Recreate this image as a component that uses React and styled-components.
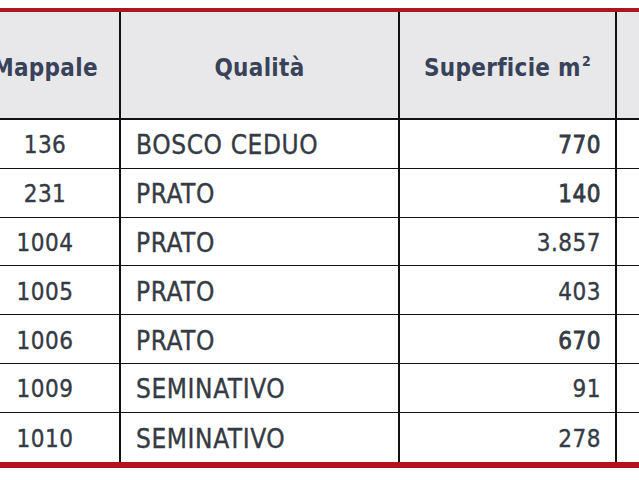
import styled, { createGlobalStyle } from 'styled-components';

const GlobalStyle = createGlobalStyle`
  html, body {
    margin: 0;
    padding: 0;
    background: #ffffff;
  }
  body {
    font-family: "DejaVu Sans Condensed", "DejaVu Sans", sans-serif;
    font-stretch: condensed;
  }
`;

const Frame = styled.div`
  width: 639px;
  height: 480px;
  overflow: hidden;
  padding-top: 8px;
  box-sizing: border-box;
`;

const Grid = styled.div`
  display: grid;
  grid-template-columns: 150px 279px 217px 120px;
  margin-left: -29px;
  width: 766px;
  border-top: 4px solid #ad1820;
  border-bottom: 6px solid #b3121c;
`;

const HeadCell = styled.div`
  height: 108px;
  box-sizing: border-box;
  background: #e8e8ea;
  border-right: 2px solid #111;
  border-bottom: 2px solid #111;
  display: flex;
  align-items: center;
  justify-content: center;
  padding-top: 5px;
  font-weight: 700;
  font-size: 24px;
  letter-spacing: 0.3px;
  color: #384258;
`;

const Sup = styled.span`
  font-size: 14px;
  position: relative;
  top: -7px;
  margin-left: 1px;
`;

const Cell = styled.div`
  height: 48.8px;
  box-sizing: border-box;
  border-right: 2px solid #111;
  border-bottom: ${(p) => (p.$last ? 'none' : '1.5px solid #111')};
  display: flex;
  align-items: center;
  justify-content: ${(p) => p.$align || 'flex-start'};
  padding: 3px ${(p) => (p.$align === 'flex-end' ? '14px' : '0')} 0 ${(p) => (p.$align === 'flex-start' ? '15px' : '0')};
  font-size: ${(p) => (p.$text ? '26px' : '24px')};
  letter-spacing: ${(p) => (p.$text ? '0.6px' : '0.5px')};
  -webkit-text-stroke: ${(p) => (p.$bold ? '0.8px' : '0.35px')} #353b45;
  color: #353b45;
`;

const rows = [
  { mappale: '136', qualita: 'BOSCO CEDUO', sup: '770', bold: true },
  { mappale: '231', qualita: 'PRATO', sup: '140', bold: true },
  { mappale: '1004', qualita: 'PRATO', sup: '3.857' },
  { mappale: '1005', qualita: 'PRATO', sup: '403' },
  { mappale: '1006', qualita: 'PRATO', sup: '670', bold: true },
  { mappale: '1009', qualita: 'SEMINATIVO', sup: '91' },
  { mappale: '1010', qualita: 'SEMINATIVO', sup: '278' },
];

export default function App() {
  return (
    <Frame>
      <GlobalStyle />
      <Grid>
        <HeadCell>Mappale</HeadCell>
        <HeadCell>Qualità</HeadCell>
        <HeadCell>
          Superficie m<Sup>2</Sup>
        </HeadCell>
        <HeadCell />
        {rows.map((row, i) => {
          const last = i === rows.length - 1;
          return [
            <Cell key={`m${i}`} $align="center" $last={last}>{row.mappale}</Cell>,
            <Cell key={`q${i}`} $align="flex-start" $text $last={last}>{row.qualita}</Cell>,
            <Cell key={`s${i}`} $align="flex-end" $bold={row.bold} $last={last}>{row.sup}</Cell>,
            <Cell key={`e${i}`} $last={last} />,
          ];
        })}
      </Grid>
    </Frame>
  );
}
